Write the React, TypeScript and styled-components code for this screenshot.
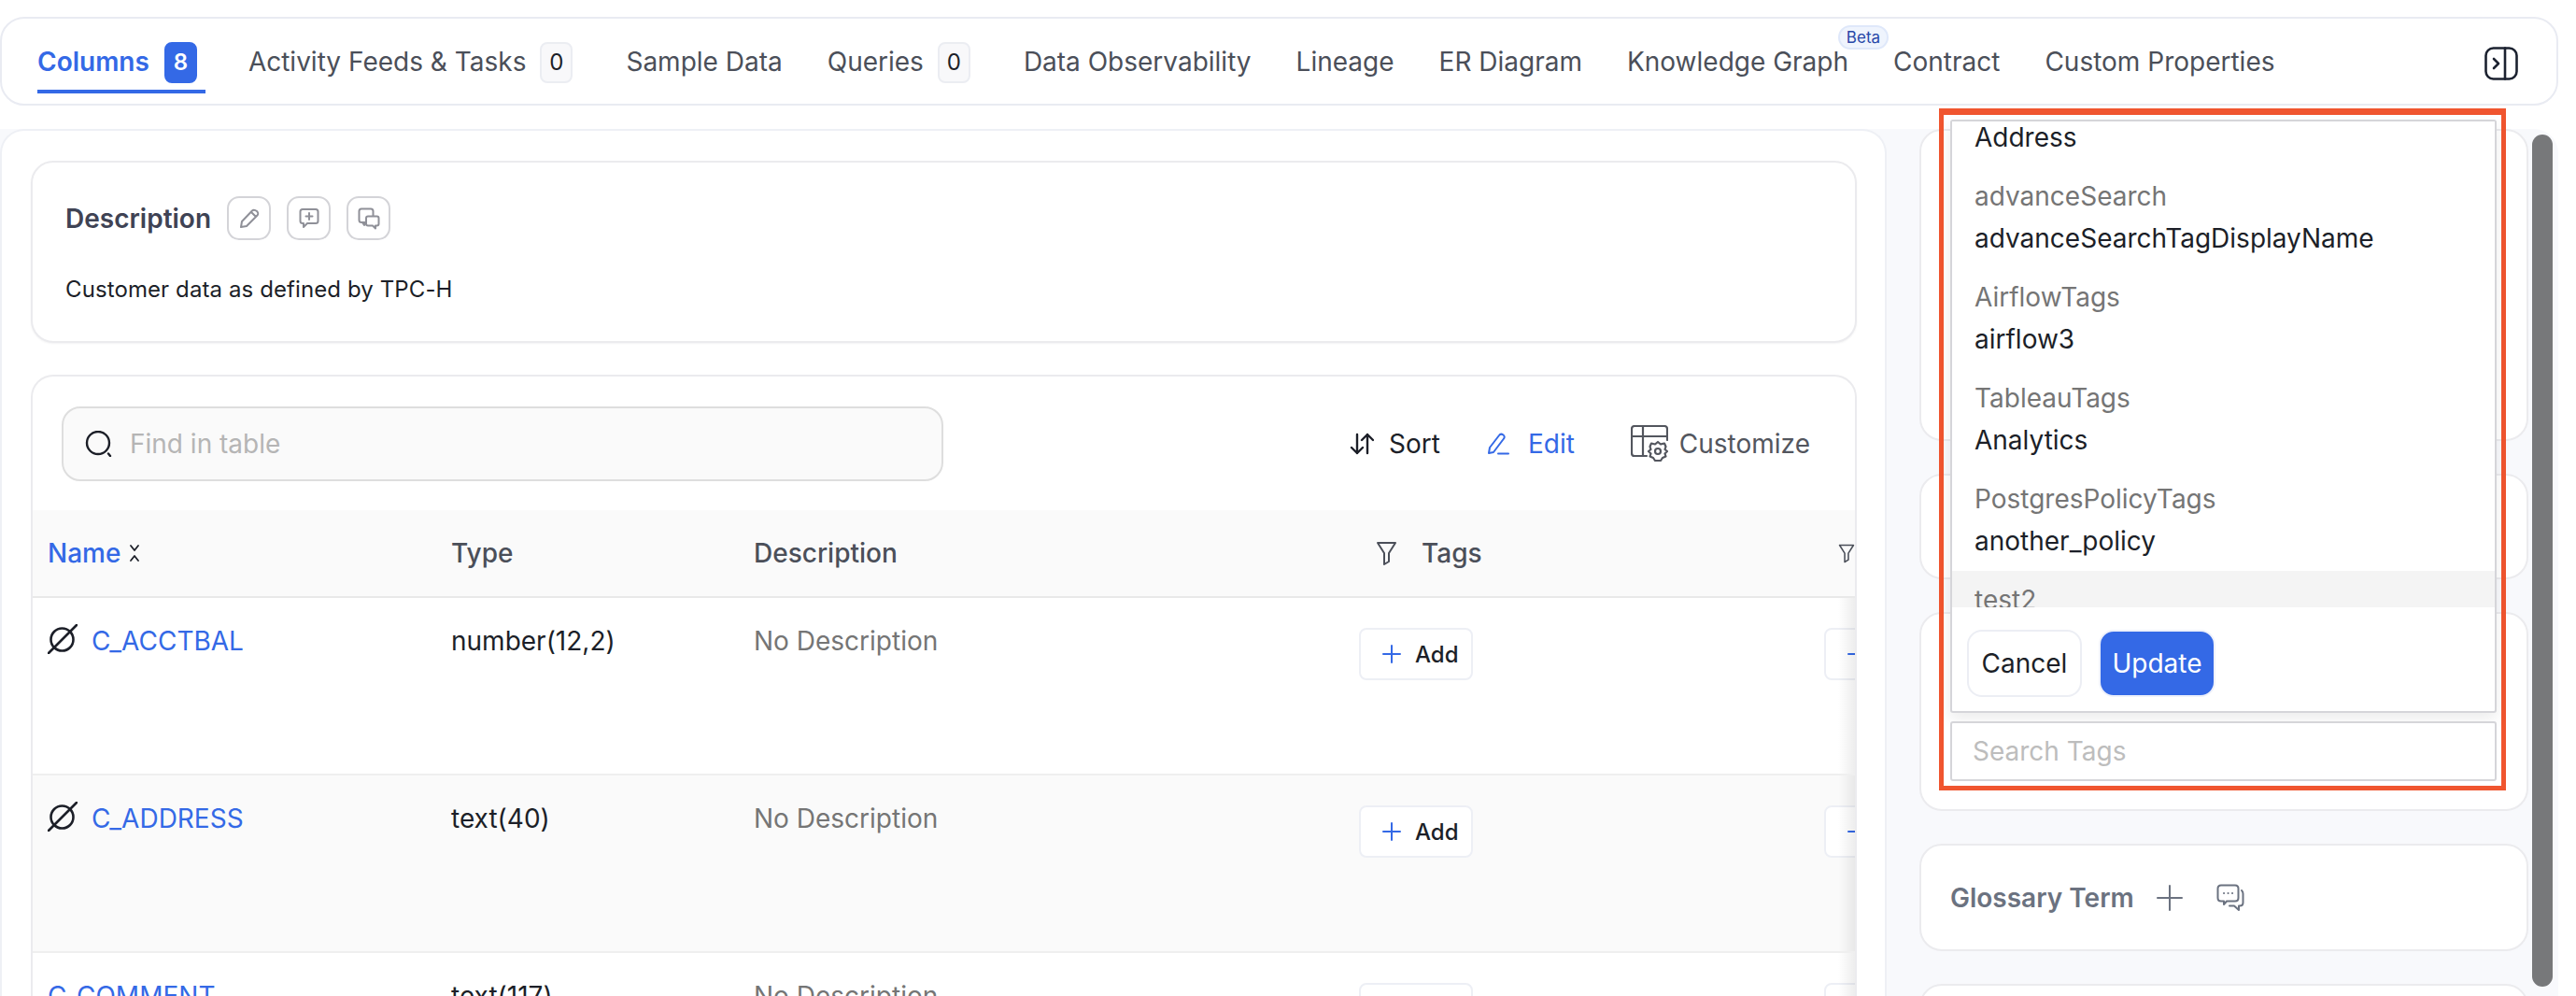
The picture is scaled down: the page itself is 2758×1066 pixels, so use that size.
import React from "react";
import styled, { createGlobalStyle } from "styled-components";

const BLUE = "#3469e6";

const Global = createGlobalStyle`
	html, body {
		margin: 0;
		padding: 0;
		background: #fff;
	}
	* {
		box-sizing: border-box;
	}
	body {
		font-family: "Inter", "Liberation Sans", sans-serif;
		font-size: 28px;
		color: #1c1f28;
	}
`;

const Page = styled.div`
	position: relative;
	width: 2758px;
	height: 1066px;
	overflow: hidden;
	padding-top: 18px;
`;

// top tabs
const TabBar = styled.nav`
	display: flex;
	align-items: flex-start;
	gap: 48px;
	width: 2739px;
	height: 95px;
	padding: 25px 41px 0 38px;
	background: #fff;
	border: 2px solid #e9ebf2;
	border-radius: 26px;
`;

const Tab = styled.div<{ $active?: boolean }>`
	position: relative;
	display: flex;
	align-items: flex-start;
	height: 55px;
	padding-bottom: 7px;
	padding-right: ${(p) => (p.$active ? "9px" : "0")};
	margin-right: ${(p) => (p.$active ? "-2px" : "0")};
	line-height: 42px;
	white-space: nowrap;
	color: ${(p) => (p.$active ? BLUE : "#4b4f59")};
	font-weight: ${(p) => (p.$active ? 600 : 400)};
	border-bottom: 4px solid ${(p) => (p.$active ? BLUE : "transparent")};
`;

const Count = styled.span<{ $active?: boolean }>`
	display: flex;
	align-items: center;
	justify-content: center;
	width: 35px;
	height: 44px;
	margin-left: ${(p) => (p.$active ? "16px" : "15px")};
	margin-right: ${(p) => (p.$active ? "0" : "9px")};
	font-size: 24px;
	font-weight: ${(p) => (p.$active ? 600 : 400)};
	border-radius: 8px;
	background: ${(p) => (p.$active ? BLUE : "#f8f8fa")};
	color: ${(p) => (p.$active ? "#fff" : "#1c1f28")};
	border: 2px solid ${(p) => (p.$active ? BLUE : "#ebedf2")};
`;

const Beta = styled.span`
	position: absolute;
	left: 226px;
	top: -18px;
	width: 54px;
	height: 26px;
	display: flex;
	align-items: center;
	justify-content: center;
	font-size: 17px;
	line-height: 1;
	color: #2748a8;
	background: #eff4fd;
	border: 2px solid #dfe8fa;
	border-radius: 13px;
`;

const CollapseButton = styled.div`
	display: flex;
	margin-left: auto;
	margin-top: 5px;
`;

// page body
const Main = styled.main`
	display: flex;
	width: 2739px;
	height: 930px;
	margin-top: 25px;
	background: #f8f9fc;
	border-radius: 0 26px 0 0;
`;

const LeftPanel = styled.section`
	flex: 0 0 2020px;
	min-width: 0;
	padding: 32px 30px 0 31px;
	background: #fff;
	border: 2px solid #eef0f5;
	border-bottom: 0;
	border-radius: 26px 26px 0 0;
`;

const Card = styled.div`
	background: #fff;
	border: 2px solid #ebebee;
	border-radius: 24px;
`;

const DescriptionCard = styled(Card)`
	height: 195px;
	padding: 36px 35px 0;
	box-shadow: 0 1px 2px rgba(16, 24, 40, 0.05);
`;

const DescriptionHead = styled.div`
	display: flex;
	align-items: center;
	height: 47px;
`;

const DescriptionTitle = styled.h3`
	margin: 0 17px 0 0;
	font-size: 28px;
	font-weight: 600;
	color: #3f4354;
`;

const IconButton = styled.button`
	display: flex;
	align-items: center;
	justify-content: center;
	width: 47px;
	height: 47px;
	margin-right: 17px;
	padding: 0;
	background: #fff;
	border: 2px solid #d4d4d8;
	border-radius: 13px;
`;

const DescriptionText = styled.p`
	margin: 38px 0 0;
	font-size: 24px;
	line-height: 30px;
	letter-spacing: 0.1px;
	color: #1c1f28;
`;

const TableCard = styled(Card)`
	margin-top: 34px;
	height: 720px;
	overflow: hidden;
	border-bottom: 0;
	border-radius: 24px 24px 0 0;
`;

const Toolbar = styled.div`
	display: flex;
	align-items: center;
	height: 143px;
	padding: 0 46px 0 31px;
`;

const SearchBox = styled.div`
	display: flex;
	align-items: center;
	gap: 18px;
	width: 944px;
	height: 80px;
	padding: 0 23px;
	background: #fafafa;
	border: 2px solid #dedede;
	border-radius: 20px;
	color: #b5b5b5;
`;

const ToolButton = styled.div<{ $color?: string; $gap: number; $left: number }>`
	display: flex;
	align-items: center;
	gap: ${(p) => p.$gap}px;
	margin-left: ${(p) => p.$left}px;
	color: ${(p) => p.$color || "#1c1f28"};
`;

const Grid = styled.div<{ $head?: boolean; $shade?: boolean }>`
	position: relative;
	display: grid;
	grid-template-columns: 432px 324px 648px 498px 49px;
	height: ${(p) => (p.$head ? "94px" : "190px")};
	background: ${(p) => (p.$shade || p.$head ? "#fafafa" : "#fff")};
	border-bottom: 2px solid ${(p) => (p.$head ? "#e9e9e9" : "#efefef")};
	${(p) =>
		!p.$head &&
		`&::after {
			content: "";
			position: absolute;
			top: 0;
			right: 0;
			bottom: 0;
			width: 18px;
			background: linear-gradient(to right, rgba(0, 0, 0, 0), rgba(0, 0, 0, 0.07));
		}`}
`;

const Cell = styled.div<{ $pad?: number }>`
	display: flex;
	align-items: flex-start;
	padding-left: ${(p) => p.$pad ?? 16}px;
	overflow: hidden;
	white-space: nowrap;
`;

const HeadCell = styled(Cell)<{ $blue?: boolean }>`
	align-items: center;
	font-weight: 500;
	color: ${(p) => (p.$blue ? BLUE : "#4b4f59")};
`;

const BodyText = styled.span<{ $muted?: boolean }>`
	margin-top: 26px;
	line-height: 40px;
	color: ${(p) => (p.$muted ? "#757575" : "#1c1f28")};
`;

const NameLink = styled.a`
	margin-top: 26px;
	line-height: 40px;
	color: ${BLUE};
`;

const RowIcon = styled.span`
	display: flex;
	width: 47px;
	flex: none;
	margin-top: 28px;
`;

const SortMark = styled.span`
	display: flex;
	margin-left: 9px;
`;

const TagsLabel = styled.span`
	margin-left: 26px;
`;

const AddButton = styled.button`
	display: flex;
	align-items: center;
	flex: none;
	gap: 15px;
	width: 122px;
	height: 56px;
	margin-top: 32px;
	padding: 0 0 0 23px;
	font: 500 24px "Inter", sans-serif;
	color: #1c1f28;
	background: #fff;
	border: 2px solid #edeff5;
	border-radius: 8px;
`;

// right column
const RightPanel = styled.aside`
	display: flex;
	flex-direction: column;
	flex: 0 0 652px;
	margin-left: 35px;
	gap: 35px;
`;

const SideCard = styled(Card)<{ $h: number }>`
	flex: none;
	height: ${(p) => p.$h}px;
`;

const GlossaryCard = styled(SideCard)`
	display: flex;
	align-items: center;
	padding-left: 31px;
`;

const GlossaryTitle = styled.span`
	font-weight: 600;
	color: #6b7280;
	margin-right: 24px;
`;

const GlossaryChat = styled.span`
	display: flex;
	margin-left: 36px;
`;

const ScrollThumb = styled.div`
	position: absolute;
	left: 2711px;
	top: 144px;
	width: 22px;
	height: 912px;
	background: #77787a;
	border-radius: 11px;
`;

// tag dropdown with the red annotation round it
const Highlight = styled.div`
	position: absolute;
	left: 2076px;
	top: 116px;
	width: 607px;
	height: 730px;
	display: flex;
	flex-direction: column;
	gap: 9px;
	padding: 5px 5px 4px 7px;
	border: 5px solid #f0552f;
	border-top-width: 7px;
`;

const Dropdown = styled.div`
	display: flex;
	flex-direction: column;
	height: 635px;
	background: #fff;
	border: 2px solid #d5d5d9;
	border-radius: 3px;
	box-shadow: 0 6px 16px rgba(0, 0, 0, 0.08);
`;

const OptionList = styled.div`
	height: 520px;
	overflow: hidden;
`;

const OptionScroll = styled.div`
	margin-top: -59px;
`;

const Option = styled.div<{ $hover?: boolean }>`
	height: 108px;
	padding: 16px 24px 0;
	background: ${(p) => (p.$hover ? "#f4f4f4" : "#fff")};
`;

const OptionGroup = styled.div`
	min-height: 30px;
	line-height: 30px;
	color: #757575;
`;

const OptionValue = styled.div`
	margin-top: 15px;
	line-height: 30px;
	color: #1c1f28;
`;

const Footer = styled.div`
	display: flex;
	gap: 18px;
	padding: 24px 16px 0;
`;

const FooterButton = styled.button<{ $primary?: boolean }>`
	width: ${(p) => (p.$primary ? 125 : 123)}px;
	height: 72px;
	padding: 0;
	font: 400 28px "Inter", sans-serif;
	color: ${(p) => (p.$primary ? "#fff" : "#1c1f28")};
	background: ${(p) => (p.$primary ? BLUE : "#fff")};
	border: 2px solid ${(p) => (p.$primary ? "#eef1fb" : "#eceef4")};
	border-radius: 16px;
`;

const TagSearch = styled.div`
	display: flex;
	align-items: center;
	height: 64px;
	padding-left: 22px;
	background: #fff;
	border: 2px solid #d5d5d9;
	border-radius: 3px;
	color: #bdbdbd;
`;

const Svg = ({ w, h, vb, color = "currentColor", sw = 2, children }: any) => (
	<svg width={w} height={h} viewBox={vb || `0 0 ${w} ${h}`} fill="none" stroke={color} strokeWidth={sw} strokeLinecap="round" strokeLinejoin="round">
		{children}
	</svg>
);

const PlusIcon = ({ size, color }: any) => (
	<Svg w={size} h={size} color={color}>
		<path d={`M${size / 2} 1V${size - 1}M1 ${size / 2}H${size - 1}`} />
	</Svg>
);

const NoConstraint = () => (
	<Svg w={32} h={32} color="#1c1f28" sw={2.6}>
		<circle cx="15.5" cy="16.5" r="12" />
		<path d="M31 1L1 31" />
	</Svg>
);

const FilterIcon = () => (
	<Svg w={23} h={27} color="#4b4f59">
		<path d="M2 2H21L14 13V22L9 25V13Z" />
	</Svg>
);

const rows = [
	{ name: "C_ACCTBAL", type: "number(12,2)", icon: true },
	{ name: "C_ADDRESS", type: "text(40)", icon: true, shade: true },
	{ name: "C_COMMENT", type: "text(117)", icon: false },
];

const options = [
	{ group: "", value: "Address" },
	{ group: "advanceSearch", value: "advanceSearchTagDisplayName" },
	{ group: "AirflowTags", value: "airflow3" },
	{ group: "TableauTags", value: "Analytics" },
	{ group: "PostgresPolicyTags", value: "another_policy" },
	{ group: "test2", value: "", hover: true },
];

export default function App() {
	return (
		<Page>
			<Global />
			<TabBar>
				<Tab $active>
					Columns
					<Count $active>8</Count>
				</Tab>
				<Tab>
					Activity Feeds &amp; Tasks
					<Count>0</Count>
				</Tab>
				<Tab>Sample Data</Tab>
				<Tab>
					Queries
					<Count>0</Count>
				</Tab>
				<Tab>Data Observability</Tab>
				<Tab>Lineage</Tab>
				<Tab>ER Diagram</Tab>
				<Tab>
					Knowledge Graph
					<Beta>Beta</Beta>
				</Tab>
				<Tab>Contract</Tab>
				<Tab>Custom Properties</Tab>
				<CollapseButton>
					<Svg w={36} h={36} color="#1c2230" sw={2.6}>
						<rect x="1.5" y="1.5" width="33" height="33" rx="8" />
						<path d="M22 1.5V34.5M10 13L15 18L10 23" />
					</Svg>
				</CollapseButton>
			</TabBar>

			<Main>
				<LeftPanel>
					<DescriptionCard>
						<DescriptionHead>
							<DescriptionTitle>Description</DescriptionTitle>
							<IconButton>
								<Svg w={22} h={22} color="#8f9098">
									<path d="M2 20L3 14L14 2.5C15 1.5 17 1.5 19 3C20.5 4.5 20.5 6.5 19.5 7.5L8 19Z M13 4L18 9" />
								</Svg>
							</IconButton>
							<IconButton>
								<Svg w={22} h={24} color="#8f9098">
									<path d="M4 2H18C19.5 2 20.5 3 20.5 4.5V14.5C20.5 16 19.5 17 18 17H9L5 21V17H4C2.5 17 1.5 16 1.5 14.5V4.5C1.5 3 2.5 2 4 2Z M11 6V13M7.5 9.5H14.5" />
								</Svg>
							</IconButton>
							<IconButton>
								<Svg w={24} h={24} color="#8f9098">
									<path d="M8 16H4C2.5 16 1.5 15 1.5 13.5V4C1.5 2.5 2.5 1.5 4 1.5H14C15.5 1.5 16.5 2.5 16.5 4V9 M5 16L7 19L9 16" />
									<path d="M11 9.5H20.5C21.8 9.5 22.5 10.2 22.5 11.5V17.5C22.5 18.8 21.8 19.5 20.5 19.5H19V22.5L16 19.5H11C9.7 19.5 9 18.8 9 17.5V11.5C9 10.2 9.7 9.5 11 9.5Z" />
								</Svg>
							</IconButton>
						</DescriptionHead>
						<DescriptionText>Customer data as defined by TPC-H</DescriptionText>
					</DescriptionCard>

					<TableCard>
						<Toolbar>
							<SearchBox>
								<Svg w={30} h={28} color="#1c1f28" sw={2.4}>
									<circle cx="14" cy="13" r="12" />
									<path d="M25 24.5L27 27" />
								</Svg>
								Find in table
							</SearchBox>
							<ToolButton $gap={16} $left={435}>
								<Svg w={26} h={24} color="#1c1f28" sw={2.4}>
									<path d="M8 2V22M2 16L8 22L14 16M19 22V2M13 8L19 2L25 8" />
								</Svg>
								Sort
							</ToolButton>
							<ToolButton $color={BLUE} $gap={20} $left={50}>
								<Svg w={24} h={24} color={BLUE}>
									<path d="M2 22L3 16L13 3C14 1.5 16 1.5 17.5 2.5C19 3.5 19 5.5 18 6.5L7 21Z" />
									<path d="M12 22.5H23" />
								</Svg>
								Edit
							</ToolButton>
							<ToolButton $color="#53565e" $gap={12} $left={60}>
								<Svg w={40} h={39} color="#53565e" sw={2.2}>
									<path d="M17 33H4C2.3 33 1 31.7 1 30V4C1 2.3 2.3 1 4 1H36C37.7 1 39 2.3 39 4V16 M1 12H39M13 1V33" />
									<circle cx="29" cy="28" r="3" />
									<path d="M29 18L32 20.5L36 19.5L37.5 23L36.5 26L39 28L36.5 30.5L37.5 33.5L34 35L32 38H26L24 35L20.5 33.5L21.5 30.5L19 28L21.5 26L20.5 23L22 19.5L26 20.5Z" />
								</Svg>
								Customize
							</ToolButton>
						</Toolbar>

						<Grid $head>
							<HeadCell $blue>
								Name
								<SortMark>
									<Svg w={12} h={20} color="#1c1f28" sw={1.8}>
										<path d="M2 2L6 7L10 2M2 18L6 13L10 18" />
									</Svg>
								</SortMark>
							</HeadCell>
							<HeadCell>Type</HeadCell>
							<HeadCell>Description</HeadCell>
							<HeadCell $pad={34}>
								<FilterIcon />
								<TagsLabel>Tags</TagsLabel>
							</HeadCell>
							<HeadCell $pad={31}>
								<FilterIcon />
							</HeadCell>
						</Grid>

						{rows.map((r) => (
							<Grid key={r.name} $shade={r.shade}>
								<Cell>
									{r.icon && (
										<RowIcon>
											<NoConstraint />
										</RowIcon>
									)}
									<NameLink>{r.name}</NameLink>
								</Cell>
								<Cell>
									<BodyText>{r.type}</BodyText>
								</Cell>
								<Cell>
									<BodyText $muted>No Description</BodyText>
								</Cell>
								<Cell>
									<AddButton>
										<PlusIcon size={20} color={BLUE} />
										Add
									</AddButton>
								</Cell>
								<Cell>
									<AddButton>
										<PlusIcon size={20} color={BLUE} />
										Add
									</AddButton>
								</Cell>
							</Grid>
						))}
					</TableCard>
				</LeftPanel>

				<RightPanel>
					<SideCard $h={334} />
					<SideCard $h={113} />
					<SideCard $h={213} />
					<GlossaryCard $h={115}>
						<GlossaryTitle>Glossary Term</GlossaryTitle>
						<PlusIcon size={28} color="#6b7280" />
						<GlossaryChat>
							<Svg w={30} h={30} color="#6b7280">
								<path d="M5 1.5H20C22 1.5 23.5 3 23.5 5V15C23.5 17 22 18.5 20 18.5H11L8 22V18.5H5C3 18.5 1.5 17 1.5 15V5C1.5 3 3 1.5 5 1.5Z" />
								<path d="M27 7C28 8 28.5 9 28.5 10.5V20C28.5 22 27 23.5 25 23.5H24V28L19 23.5H14" />
								<path d="M8 10H8.1M12.5 10H12.6M17 10H17.1" />
							</Svg>
						</GlossaryChat>
					</GlossaryCard>
					<SideCard $h={200} />
				</RightPanel>
			</Main>

			<ScrollThumb />

			<Highlight>
				<Dropdown>
					<OptionList>
						<OptionScroll>
							{options.map((o) => (
								<Option key={o.group + o.value} $hover={o.hover}>
									<OptionGroup>{o.group}</OptionGroup>
									{o.value && <OptionValue>{o.value}</OptionValue>}
								</Option>
							))}
						</OptionScroll>
					</OptionList>
					<Footer>
						<FooterButton>Cancel</FooterButton>
						<FooterButton $primary>Update</FooterButton>
					</Footer>
				</Dropdown>
				<TagSearch>Search Tags</TagSearch>
			</Highlight>
		</Page>
	);
}
